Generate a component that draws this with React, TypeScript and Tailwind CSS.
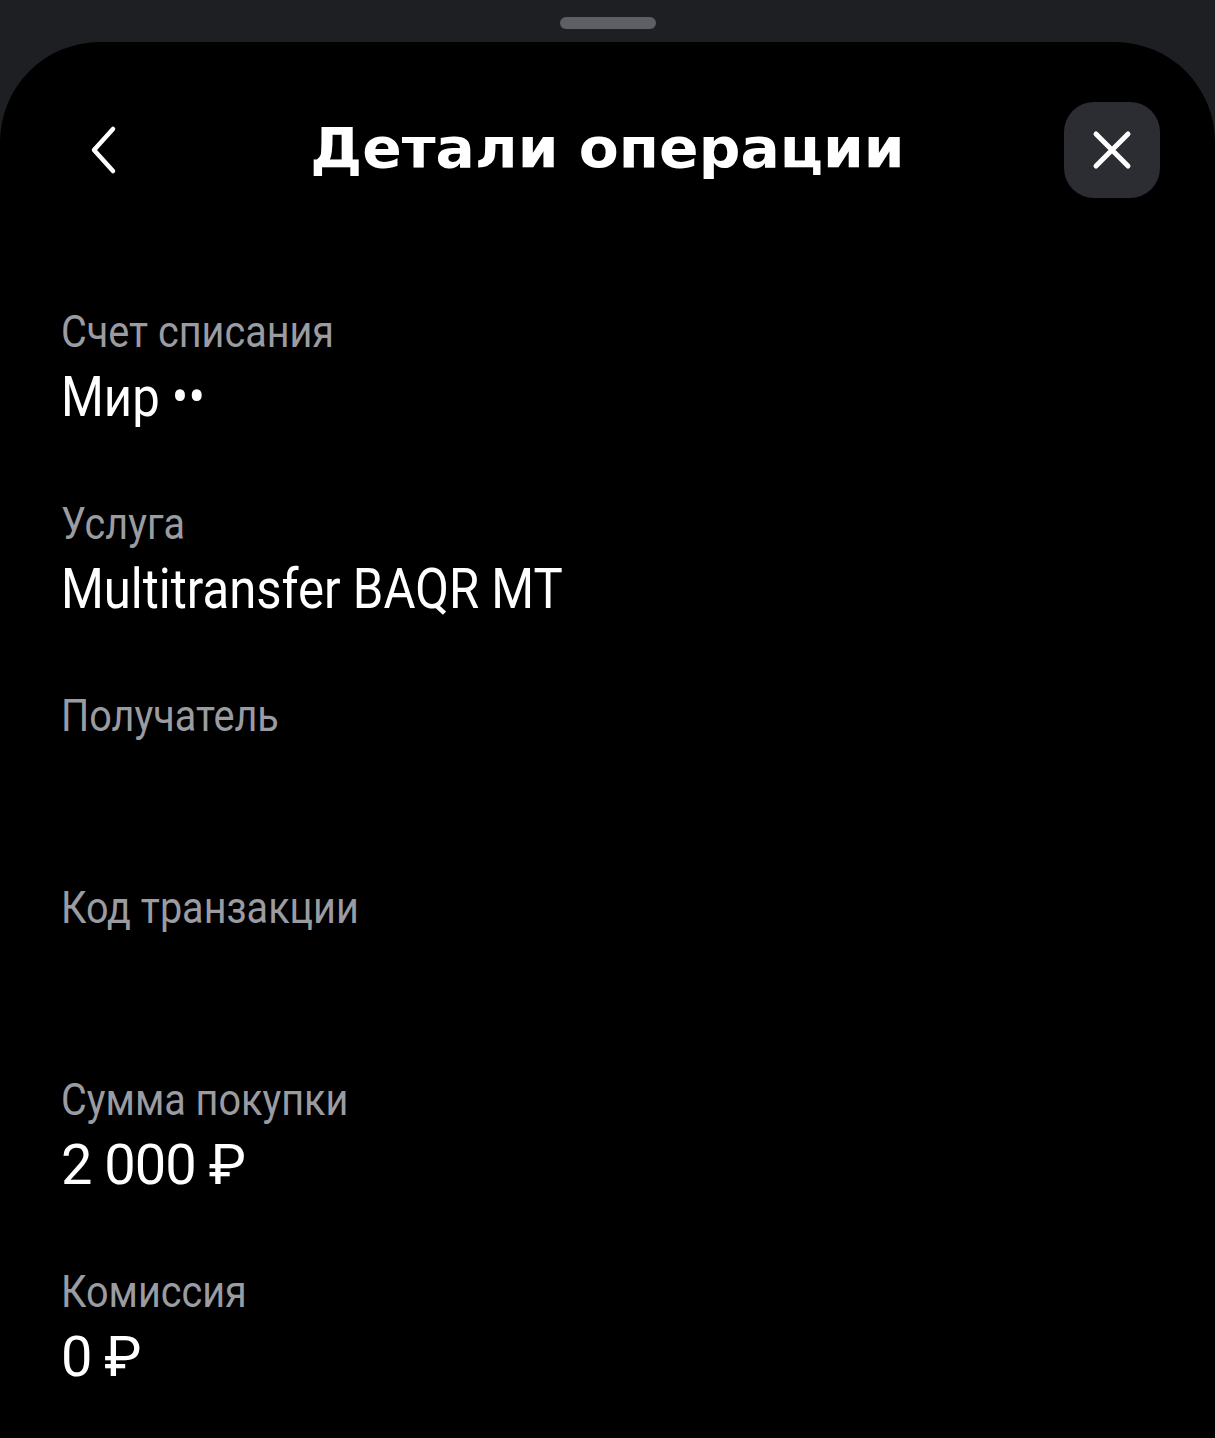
const rows = [
  { label: "Счет списания", value: "Мир ••", num: false },
  { label: "Услуга", value: "Multitransfer BAQR MT", num: false },
  { label: "Получатель", value: "", num: false },
  { label: "Код транзакции", value: "", num: false },
  { label: "Сумма покупки", value: "2 000 ₽", num: true },
  { label: "Комиссия", value: "0 ₽", num: true },
];

export default function App() {
  return (
    <div className="min-h-[1438px] bg-[#1e1f23] flex flex-col">
      {/* grabber */}
      <div className="h-[42px] flex justify-center pt-[17px]">
        <div className="w-[96px] h-[12px] rounded-full bg-[#5e5f64]" />
      </div>

      <div className="flex-1 bg-black rounded-t-[100px] pt-[60px]">
        <div className="grid grid-cols-[96px_1fr_96px] items-center px-[55px] h-[96px]">
          <button className="flex items-center justify-center h-[96px]">
            <svg width="30" height="50" viewBox="0 0 30 50" fill="none">
              <path d="M25 4 L6 25 L25 46" stroke="white" strokeWidth="4.5" strokeLinecap="round" strokeLinejoin="round" />
            </svg>
          </button>
          <h1 className="text-center text-white font-bold text-[55px] leading-[96px] font-['DejaVu_Sans',sans-serif] scale-x-[1.06] -mt-[4px] whitespace-nowrap">
            Детали операции
          </h1>
          <button className="w-[96px] h-[96px] rounded-[30px] bg-[#2c2d32] flex items-center justify-center">
            <svg width="40" height="40" viewBox="0 0 40 40" fill="none">
              <path d="M4 4 L36 36 M36 4 L4 36" stroke="white" strokeWidth="5" strokeLinecap="round" />
            </svg>
          </button>
        </div>

        <div className="px-[61px] pt-[108px] flex flex-col gap-[71px] font-['Roboto',sans-serif]">
          {rows.map((r) => (
            <div key={r.label} className="flex flex-col gap-[9px] items-start">
              <p className="text-[45px] leading-[52px] text-[#9a9ca2] whitespace-nowrap scale-x-[0.88] origin-left">{r.label}</p>
              {r.num ? (
                <p className="text-[56px] leading-[60px] text-white h-[60px] whitespace-nowrap tracking-[-1px]">{r.value}</p>
              ) : (
                <p className="text-[56px] leading-[60px] text-white h-[60px] whitespace-nowrap scale-x-[0.876] origin-left">{r.value}</p>
              )}
            </div>
          ))}
        </div>
      </div>
    </div>
  );
}
